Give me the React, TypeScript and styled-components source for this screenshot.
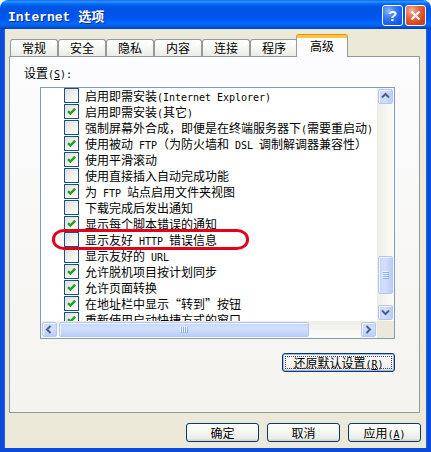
import React from 'react';
import styled, { createGlobalStyle } from 'styled-components';

const CJK = `"Noto Sans CJK SC", "Noto Sans", sans-serif`;
const MONO = `"DejaVu Sans Mono", "Liberation Mono", monospace`;

const GlobalStyle = createGlobalStyle`
  html, body {
    margin: 0;
    padding: 0;
    background: #fff;
  }
  body {
    font-family: ${CJK};
    font-size: 12px;
    color: #000;
  }
`;

const Window = styled.div`
  width: 431px;
  height: 452px;
  display: flex;
  flex-direction: column;
  border-radius: 8px 8px 0 0;
  overflow: hidden;
`;

const TitleBar = styled.div`
  height: 29px;
  flex: none;
  display: flex;
  align-items: center;
  justify-content: space-between;
  padding: 0 5px 0 8px;
  background: linear-gradient(
    180deg,
    #0058ee 0%,
    #3593ff 4%,
    #288eff 7%,
    #127dff 10%,
    #036ffc 13%,
    #0262ee 17%,
    #0057e5 24%,
    #0054e3 30%,
    #0055eb 56%,
    #005bf5 68%,
    #026afe 80%,
    #0062ef 88%,
    #0052d6 94%,
    #0040ab 100%
  );
`;

const TitleText = styled.div`
  color: #fff;
  font-family: ${CJK};
  font-weight: 700;
  font-size: 13px;
  padding-top: 2px;
  text-shadow: 1px 1px 0 #0a2a8a;
  white-space: pre;
`;

const TitleLatin = styled.span`
  font-family: "Liberation Mono", monospace;
  font-size: 13px;
  font-weight: 700;
`;

const CaptionButtons = styled.div`
  display: flex;
  gap: 2px;
  padding-top: 1px;
`;

const CaptionButton = styled.div<{ $kind: 'help' | 'close' }>`
  width: 21px;
  height: 21px;
  box-sizing: border-box;
  border: 1px solid #fff;
  border-radius: 3px;
  display: flex;
  align-items: center;
  justify-content: center;
  color: #fff;
  font-family: "Liberation Sans", Arial, sans-serif;
  font-weight: 700;
  font-size: 15px;
  background: ${(p) =>
    p.$kind === 'close'
      ? 'radial-gradient(circle at 30% 25%, #f7b59f 0%, #e96a44 35%, #d8461f 70%, #c23a18 100%)'
      : 'radial-gradient(circle at 30% 25%, #8fb8ff 0%, #3a7cf6 35%, #1a5fee 70%, #1050dc 100%)'};
`;

const Frame = styled.div`
  flex: 1;
  display: flex;
  flex-direction: column;
  background: #ece9d8;
  border: 4px solid #0a4bdc;
  border-top: none;
  box-shadow: inset 1px 0 0 #1f63ea, inset -1px 0 0 #1f63ea;
`;

const TabStrip = styled.div`
  display: flex;
  align-items: flex-end;
  height: 22px;
  margin-top: 6px;
  padding-left: 6px;
`;

const Tab = styled.div<{ $active?: boolean }>`
  position: relative;
  z-index: ${(p) => (p.$active ? 2 : 0)};
  box-sizing: border-box;
  width: ${(p) => (p.$active ? 52 : 48)}px;
  height: ${(p) => (p.$active ? 22 : 17)}px;
  margin: ${(p) => (p.$active ? '0 -2px 0 -2px' : '0 0 1px 0')};
  border: 1px solid #919b9c;
  border-bottom: none;
  border-top: ${(p) => (p.$active ? '3px solid #ffc73c' : '1px solid #919b9c')};
  border-radius: 3px 3px 0 0;
  box-shadow: ${(p) => (p.$active ? '0 -1px 0 #e68b2c' : 'none')};
  background: ${(p) =>
    p.$active ? '#fcfcfe' : 'linear-gradient(180deg, #ffffff 0%, #f7f7f4 50%, #ecebe5 100%)'};
  display: flex;
  align-items: center;
  justify-content: center;
  padding-bottom: ${(p) => (p.$active ? 4 : 0)}px;
  font-size: 12px;
  line-height: 14px;
`;

const Panel = styled.div`
  position: relative;
  z-index: 1;
  margin: -1px 0 0 5px;
  width: 411px;
  height: 357px;
  box-sizing: border-box;
  border: 1px solid #919b9c;
  background: linear-gradient(180deg, #fcfcfe 0%, #f4f3ee 100%);
  padding: 9px 24px 0 14px;
  display: flex;
  flex-direction: column;
`;

const FieldLabel = styled.div`
  height: 14px;
  line-height: 14px;
  white-space: pre;
`;

/* half-width run: 6px per character, like the dialog's bitmap font */
const Latin = styled.span`
  font-family: ${MONO};
  font-size: 10px;
  letter-spacing: -0.02px;
  white-space: pre;
`;

const ListBox = styled.div`
  margin: 7px 0 0 16px;
  width: 355px;
  height: 252px;
  box-sizing: border-box;
  border: 1px solid #7f9db9;
  background: #fff;
  display: grid;
  grid-template-columns: 1fr 17px;
  grid-template-rows: 1fr 17px;
  grid-template-areas:
    'items vbar'
    'hbar corner';
`;

const ListViewport = styled.div`
  grid-area: items;
  position: relative;
  overflow: hidden;
`;

const Row = styled.div`
  display: flex;
  align-items: flex-start;
  height: 16px;
  padding-left: 23px;
  white-space: pre;
`;

const CheckBox = styled.div`
  flex: none;
  width: 15px;
  height: 15px;
  box-sizing: border-box;
  border: 1px solid #1c5180;
  background: linear-gradient(135deg, #dcdcd7 0%, #ededea 45%, #ffffff 100%);
  display: flex;
  align-items: center;
  justify-content: center;
`;

const RowText = styled.span`
  margin-left: 6px;
  line-height: 16px;
`;

const Highlight = styled.div`
  position: absolute;
  left: 11px;
  top: 141px;
  width: 197px;
  height: 21px;
  box-sizing: border-box;
  border: 3px solid #e2001a;
  border-radius: 12px / 10px;
  pointer-events: none;
`;

const VScrollBar = styled.div`
  grid-area: vbar;
  display: flex;
  flex-direction: column;
  background: linear-gradient(90deg, #eeede5 0%, #f7f7f3 60%, #fbfbf9 100%);
`;

const HScrollBar = styled.div`
  grid-area: hbar;
  display: flex;
  background: linear-gradient(180deg, #eeede5 0%, #f7f7f3 60%, #fbfbf9 100%);
`;

const Corner = styled.div`
  grid-area: corner;
  background: #ece9d8;
`;

const ArrowButton = styled.div`
  flex: none;
  width: 17px;
  height: 17px;
  box-sizing: border-box;
  padding: 1px;
  display: flex;
`;

const ButtonFace = styled.div<{ $vertical?: boolean }>`
  flex: 1;
  box-sizing: border-box;
  border: 1px solid #b5c7ef;
  border-radius: 2px;
  background: ${(p) =>
    p.$vertical
      ? 'linear-gradient(90deg, #c4d6fc 0%, #d3e0fd 40%, #b8cdf8 100%)'
      : 'linear-gradient(180deg, #c4d6fc 0%, #d3e0fd 40%, #b8cdf8 100%)'};
  box-shadow: inset 1px 1px 0 #eef3fe;
  display: flex;
  align-items: center;
  justify-content: center;
`;

const Track = styled.div<{ $vertical?: boolean }>`
  flex: 1;
  display: flex;
  flex-direction: ${(p) => (p.$vertical ? 'column' : 'row')};
`;

const Thumb = styled.div<{ $vertical?: boolean; $offset: number; $size: number }>`
  flex: none;
  box-sizing: border-box;
  ${(p) =>
    p.$vertical
      ? `margin: ${p.$offset}px 1px 0 1px; height: ${p.$size}px;`
      : `margin: 1px 0 1px ${p.$offset}px; width: ${p.$size}px;`}
  border: 1px solid #b5c7ef;
  border-radius: 2px;
  background: ${(p) =>
    p.$vertical
      ? 'linear-gradient(90deg, #c4d6fc 0%, #d3e0fd 40%, #b8cdf8 100%)'
      : 'linear-gradient(180deg, #c4d6fc 0%, #d3e0fd 40%, #b8cdf8 100%)'};
  box-shadow: inset 1px 1px 0 #eef3fe;
  display: flex;
  align-items: center;
  justify-content: center;
`;

const ResetButton = styled.button`
  position: relative;
  align-self: flex-end;
  margin-top: 14px;
  width: 113px;
  height: 19px;
  padding: 0;
  border: 1px solid #003c74;
  border-radius: 3px;
  background: linear-gradient(180deg, #ffffff 0%, #f5f5f1 50%, #ecebe6 85%, #d6d0c5 100%);
  box-shadow: inset 0 0 0 1px #9fb6ee;
  font-family: ${CJK};
  font-size: 12px;
  color: #000;
  white-space: pre;
  &::after {
    content: '';
    position: absolute;
    inset: 2px;
    border: 1px dotted #444;
  }
`;

const ButtonRow = styled.div`
  display: flex;
  justify-content: flex-end;
  gap: 8px;
  margin-top: 10px;
  padding-right: 6px;
`;

const DialogButton = styled.button`
  width: 73px;
  height: 19px;
  padding: 0;
  border: 1px solid #003c74;
  border-radius: 3px;
  background: linear-gradient(180deg, #ffffff 0%, #f5f5f1 50%, #ecebe6 85%, #d6d0c5 100%);
  font-family: ${CJK};
  font-size: 12px;
  color: #000;
  white-space: pre;
`;

const Mixed: React.FC<{ text: string }> = ({ text }) => (
  <>
    {text
      .split(/([\x20-\x7e]+)/)
      .filter((part) => part !== '')
      .map((part, i) =>
        /^[\x20-\x7e]+$/.test(part) ? (
          <Latin key={i}>{part}</Latin>
        ) : (
          <React.Fragment key={i}>{part}</React.Fragment>
        ),
      )}
  </>
);

const Check = () => (
  <svg width="11" height="11" viewBox="0 0 11 11">
    <path d="M2 5.2 L4.4 7.6 L9.2 2.6" fill="none" stroke="#21a121" strokeWidth="2.4" />
  </svg>
);

const Grip: React.FC<{ vertical?: boolean }> = ({ vertical }) =>
  vertical ? (
    <svg width="7" height="8" viewBox="0 0 7 8">
      {[0, 2, 4, 6].map((y) => (
        <g key={y}>
          <rect x="0" y={y} width="6" height="1" fill="#eef4fe" />
          <rect x="1" y={y + 1} width="6" height="1" fill="#8cb0f8" />
        </g>
      ))}
    </svg>
  ) : (
    <svg width="8" height="7" viewBox="0 0 8 7">
      {[0, 2, 4, 6].map((x) => (
        <g key={x}>
          <rect x={x} y="0" width="1" height="6" fill="#eef4fe" />
          <rect x={x + 1} y="1" width="1" height="6" fill="#8cb0f8" />
        </g>
      ))}
    </svg>
  );

const Arrow: React.FC<{ dir: 'up' | 'down' | 'left' | 'right' }> = ({ dir }) => {
  const points = {
    up: '1,5.5 4.5,2 8,5.5',
    down: '1,2.5 4.5,6 8,2.5',
    left: '5.5,1 2,4.5 5.5,8',
    right: '2.5,1 6,4.5 2.5,8',
  }[dir];
  return (
    <svg width="9" height="9" viewBox="0 0 9 9">
      <polyline points={points} fill="none" stroke="#4d6185" strokeWidth="2" />
    </svg>
  );
};

const tabs = ['常规', '安全', '隐私', '内容', '连接', '程序', '高级'];

const items = [
  { text: '启用即需安装(Internet Explorer)', checked: false },
  { text: '启用即需安装(其它)', checked: true },
  { text: '强制屏幕外合成，即便是在终端服务器下(需要重启动)', checked: false },
  { text: '使用被动 FTP（为防火墙和 DSL 调制解调器兼容性）', checked: true },
  { text: '使用平滑滚动', checked: true },
  { text: '使用直接插入自动完成功能', checked: false },
  { text: '为 FTP 站点启用文件夹视图', checked: true },
  { text: '下载完成后发出通知', checked: false },
  { text: '显示每个脚本错误的通知', checked: true },
  { text: '显示友好 HTTP 错误信息', checked: false },
  { text: '显示友好的 URL', checked: false },
  { text: '允许脱机项目按计划同步', checked: true },
  { text: '允许页面转换', checked: true },
  { text: '在地址栏中显示“转到”按钮', checked: true },
  { text: '重新使用启动快捷方式的窗口', checked: true },
];

const App: React.FC = () => (
  <>
    <GlobalStyle />
    <Window>
      <TitleBar>
        <TitleText>
          <TitleLatin>Internet </TitleLatin>选项
        </TitleText>
        <CaptionButtons>
          <CaptionButton $kind="help">?</CaptionButton>
          <CaptionButton $kind="close">
            <svg width="11" height="11" viewBox="0 0 11 11">
              <path d="M1.5 1.5 L9.5 9.5 M9.5 1.5 L1.5 9.5" stroke="#fff" strokeWidth="2.2" />
            </svg>
          </CaptionButton>
        </CaptionButtons>
      </TitleBar>

      <Frame>
        <TabStrip>
          {tabs.map((t) => (
            <Tab key={t} $active={t === '高级'}>
              {t}
            </Tab>
          ))}
        </TabStrip>

        <Panel>
          <FieldLabel>
            设置<Latin>(<u>S</u>):</Latin>
          </FieldLabel>

          <ListBox>
            <ListViewport>
              {items.map((item) => (
                <Row key={item.text}>
                  <CheckBox>{item.checked && <Check />}</CheckBox>
                  <RowText>
                    <Mixed text={item.text} />
                  </RowText>
                </Row>
              ))}
              <Highlight />
            </ListViewport>

            <VScrollBar>
              <ArrowButton>
                <ButtonFace $vertical>
                  <Arrow dir="up" />
                </ButtonFace>
              </ArrowButton>
              <Track $vertical>
                <Thumb $vertical $offset={151} $size={38}>
                  <Grip vertical />
                </Thumb>
              </Track>
              <ArrowButton>
                <ButtonFace $vertical>
                  <Arrow dir="down" />
                </ButtonFace>
              </ArrowButton>
            </VScrollBar>

            <HScrollBar>
              <ArrowButton>
                <ButtonFace>
                  <Arrow dir="left" />
                </ButtonFace>
              </ArrowButton>
              <Track>
                <Thumb $offset={1} $size={250}>
                  <Grip />
                </Thumb>
              </Track>
              <ArrowButton>
                <ButtonFace>
                  <Arrow dir="right" />
                </ButtonFace>
              </ArrowButton>
            </HScrollBar>
            <Corner />
          </ListBox>

          <ResetButton>
            还原默认设置<Latin>(<u>R</u>)</Latin>
          </ResetButton>
        </Panel>

        <ButtonRow>
          <DialogButton>确定</DialogButton>
          <DialogButton>取消</DialogButton>
          <DialogButton>
            应用<Latin>(<u>A</u>)</Latin>
          </DialogButton>
        </ButtonRow>
      </Frame>
    </Window>
  </>
);

export default App;
